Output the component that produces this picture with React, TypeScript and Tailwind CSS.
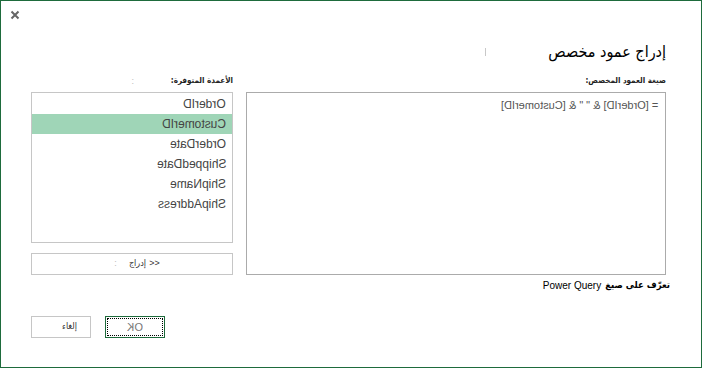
import React from "react";

const columns = ["OrderID", "CustomerID", "OrderDate", "ShippedDate", "ShipName", "ShipAddress"];

const ar = { fontFamily: '"DejaVu Sans Condensed", "DejaVu Sans", sans-serif' };
const lat = { fontFamily: '"Liberation Sans", Arial, sans-serif' };

function Mirror({ children }: { children: React.ReactNode }) {
  return (
    <span dir="ltr" className="inline-block -scale-x-100" style={lat}>
      {children}
    </span>
  );
}

export default function App() {
  return (
    <div className="w-[702px] h-[368px] bg-white border border-[#1e6b3c] flex flex-col">
      <div className="h-[38px] pl-[9px] pt-[9px]">
        <svg width="10" height="10" viewBox="0 0 10 10" className="block">
          <path d="M1.5 1.5 L8.5 8.5 M8.5 1.5 L1.5 8.5" stroke="#666" strokeWidth="2" />
        </svg>
      </div>

      <div dir="rtl" className="flex items-center h-[26px] pr-[35px]">
        <span className="w-[180px] text-[16px] leading-[26px] text-black" style={ar}>
          إدراج عمود مخصص
        </span>
        <span className="w-px h-[8px] bg-[#c8c8c8]" />
      </div>

      <div dir="rtl" className="flex gap-[13px] pr-[35px] mt-[8px]">
        <div className="w-[420px] flex flex-col">
          <div className="h-[19px] text-[8px] leading-[16px] font-bold text-[#222]" style={ar}>
            صيغة العمود المخصص:
          </div>
          <div className="h-[183px] border border-[#ababab] pr-[7px] pt-[5px] text-[11px] leading-[14px] text-[#555]">
            <Mirror>= [OrderID] &amp; " " &amp; [CustomerID]</Mirror>
          </div>
          <div className="flex items-center gap-[4px] -mr-[4px] mt-[2px] h-[16px] text-black">
            <span className="font-bold text-[9.5px]" style={ar}>
              تعرّف على صيغ
            </span>
            <span className="text-[10px]" style={lat}>
              Power Query
            </span>
          </div>
        </div>

        <div className="w-[202px] flex flex-col">
          <div className="h-[19px] flex items-start text-[8px] leading-[16px] font-bold text-[#222]">
            <span className="w-[99px] shrink-0" style={ar}>
              الأعمدة المتوفرة:
            </span>
            <span className="text-[#bbb] font-normal text-[9px]" style={lat}>
              :
            </span>
          </div>
          <div className="h-[151px] border border-[#c6c6c6] pt-px">
            {columns.map((c, i) => (
              <div
                key={c}
                className={`h-[20px] flex items-center pr-[6px] text-[12px] text-[#444] ${
                  i === 1 ? "bg-[#9fd5b7]" : ""
                }`}
              >
                <Mirror>{c}</Mirror>
              </div>
            ))}
          </div>
          <div className="mt-[10px] h-[22px] border border-[#c6c6c6] flex items-center justify-center gap-[12px] pl-[10px] text-[9px] text-[#333]">
            <span className="flex items-center gap-[3px]">
              <span style={lat}>&lt;&lt;</span>
              <span style={ar}>إدراج</span>
            </span>
            <span className="text-[#bbb]" style={lat}>
              :
            </span>
          </div>
        </div>
      </div>

      <div className="flex gap-[14px] pl-[30px] mt-[23px]">
        <div
          className="w-[60px] h-[22px] border border-[#c6c6c6] flex items-center justify-end pr-[13px] text-[9px] text-[#333]"
          style={ar}
        >
          إلغاء
        </div>
        <div className="w-[60px] h-[22px] border border-[#1e6b3c] outline-1 outline-dotted outline-black -outline-offset-3 flex items-center justify-center text-[11px] text-[#777]">
          <Mirror>OK</Mirror>
        </div>
      </div>
    </div>
  );
}
